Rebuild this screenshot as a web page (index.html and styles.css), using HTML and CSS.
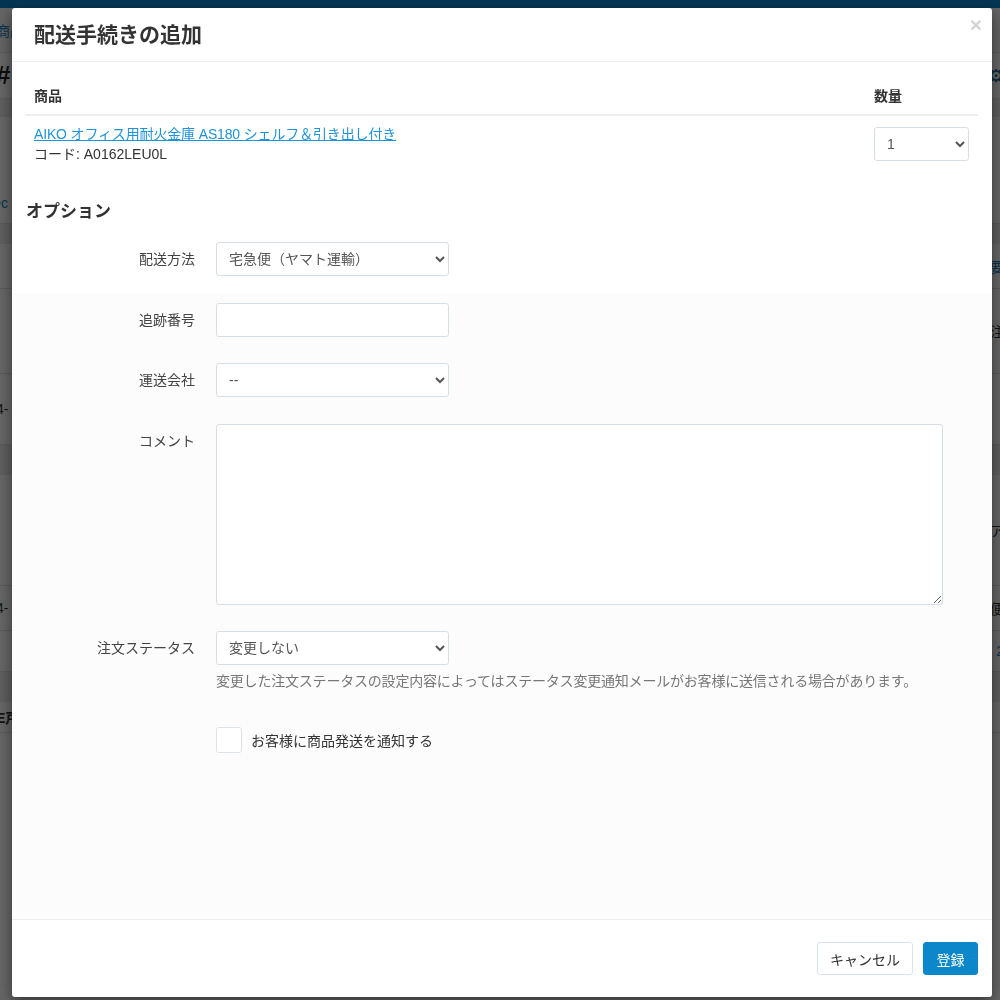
FILE: index.html
```html
<!DOCTYPE html>
<html lang="ja">
<head>
  <meta charset="utf-8">
  <title>配送手続きの追加</title>
  <link rel="stylesheet" href="styles.css">
</head>
<body>
  <div class="page">
    <div class="topbar"></div>
    <div class="bg-row r-crumb"><span class="bg-link">商品</span><span></span></div>
    <div class="bg-row r-title"><span class="bg-hash">#</span><span class="bg-gear">&#9881;</span></div>
    <div class="bg-band r-b1"></div>
    <div class="bg-row r-a"><span class="bg-link">&bull;c</span><span></span></div>
    <div class="bg-band r-b2"></div>
    <div class="bg-row r-c"><span></span><span class="bg-link">要</span></div>
    <div class="bg-row r-d"><span></span><span>注</span></div>
    <div class="bg-row r-e"><span>4-</span><span></span></div>
    <div class="bg-band r-b3"></div>
    <div class="bg-row r-f"><span></span><span>ア</span></div>
    <div class="bg-row r-g"><span>4-</span><span>便</span></div>
    <div class="bg-row r-h"><span></span><span class="bg-link">2</span></div>
    <div class="bg-band r-b4"></div>
    <div class="bg-row r-i"><span class="bg-bold">E戸</span><span></span></div>
  </div>

  <div class="backdrop"></div>

  <div class="modal">
    <div class="modal-header">
      <h4 class="modal-title">配送手続きの追加</h4>
      <button class="close" type="button">&times;</button>
    </div>

    <div class="modal-body">
      <table class="items">
        <thead>
          <tr>
            <th>商品</th>
            <th class="qty-col">数量</th>
          </tr>
        </thead>
        <tbody>
          <tr>
            <td>
              <a href="#" class="product-link">AIKO オフィス用耐火金庫 AS180 シェルフ＆引き出し付き</a>
              <div class="code">コード: A0162LEU0L</div>
            </td>
            <td class="qty-col">
              <select class="ctl qty">
                <option>1</option>
              </select>
            </td>
          </tr>
        </tbody>
      </table>

      <h3 class="section-title">オプション</h3>

      <div class="form">
        <label class="form-label" for="method">配送方法</label>
        <div>
          <select id="method" class="ctl short">
            <option>宅急便（ヤマト運輸）</option>
          </select>
        </div>

        <label class="form-label" for="tracking">追跡番号</label>
        <div>
          <input id="tracking" class="ctl short" type="text">
        </div>

        <label class="form-label" for="carrier">運送会社</label>
        <div>
          <select id="carrier" class="ctl short">
            <option>--</option>
          </select>
        </div>

        <label class="form-label" for="comment">コメント</label>
        <div>
          <textarea id="comment" class="ctl comment"></textarea>
        </div>

        <label class="form-label" for="status">注文ステータス</label>
        <div>
          <select id="status" class="ctl short">
            <option>変更しない</option>
          </select>
          <p class="help">変更した注文ステータスの設定内容によってはステータス変更通知メールがお客様に送信される場合があります。</p>
        </div>

        <div></div>
        <label class="check-row">
          <span class="check-box"></span>
          <span>お客様に商品発送を通知する</span>
        </label>
      </div>
    </div>

    <div class="modal-footer">
      <button class="btn btn-default" type="button">キャンセル</button>
      <button class="btn btn-primary" type="button">登録</button>
    </div>
  </div>
</body>
</html>
```

FILE: styles.css
```css
html,
body {
  margin: 0;
  padding: 0;
  height: 100%;
}

body {
  font-family: "Liberation Sans", "Noto Sans CJK JP", sans-serif;
  font-size: 14px;
  color: #333333;
  background-color: #ffffff;
  overflow: hidden;
}

/* Page behind the dialog */

.page {
  display: flex;
  flex-direction: column;
}

.topbar {
  height: 8px;
  background-color: #0a87d0;
}

.bg-row {
  display: flex;
  justify-content: space-between;
  align-items: center;
  margin: 0 -4px;
  border-bottom: 1px solid #e4e4e4;
  font-size: 14px;
  color: #333333;
}

.bg-band {
  background-color: #ececec;
}

.bg-link {
  color: #1a7fc1;
}

.bg-hash {
  font-size: 26px;
  font-weight: bold;
  color: #222222;
}

.bg-gear {
  font-size: 18px;
  color: #15628f;
}

.bg-bold {
  font-weight: bold;
}

.r-crumb { height: 44px; background-color: #f9f9f9; }
.r-title { height: 45px; }
.r-b1 { height: 18px; }
.r-a { height: 106px; align-items: flex-end; }
.r-a span { margin-bottom: 12px; }
.r-b2 { height: 20px; }
.r-c { height: 44px; }
.r-d { height: 84px; }
.r-e { height: 70px; }
.r-b3 { height: 30px; }
.r-f { height: 110px; }
.r-g { height: 44px; }
.r-h { height: 40px; }
.r-b4 { height: 30px; }
.r-i { height: 30px; }

.backdrop {
  position: fixed;
  inset: 0;
  background-color: rgba(0, 0, 0, 0.6);
}

/* Dialog */

.modal {
  position: fixed;
  top: 8px;
  left: 12px;
  width: 980px;
  height: 989px;
  display: flex;
  flex-direction: column;
  background-color: #ffffff;
  border-radius: 3px;
  box-shadow: 0 5px 15px rgba(0, 0, 0, 0.5);
}

.modal-header {
  display: flex;
  justify-content: space-between;
  align-items: flex-start;
  padding: 15px 10px 14px 22px;
  border-bottom: 1px solid #eeeeee;
}

.modal-title {
  margin: 0;
  font-size: 21px;
  line-height: 24px;
  font-weight: bold;
  color: #333333;
}

.close {
  margin-top: -9px;
  padding: 0;
  border: none;
  background: none;
  font-family: "Liberation Sans", sans-serif;
  font-size: 21px;
  font-weight: bold;
  line-height: 1;
  color: #d4d4d4;
  cursor: pointer;
}

.modal-body {
  flex: 1;
  padding: 16px 14px 0 13px;
  background: linear-gradient(to bottom, #ffffff 0, #ffffff 231px, #fcfcfc 231px);
}

.items {
  width: 100%;
  border-collapse: collapse;
}

.items th {
  padding: 8px 9px;
  line-height: 20px;
  text-align: left;
  font-weight: bold;
  color: #333333;
  border-bottom: 2px solid #eeeeee;
}

.items td {
  padding: 8px 8px 8px 9px;
  line-height: 20px;
  vertical-align: top;
}

.items .qty-col {
  width: 95px;
}

.product-link {
  color: #1f93d8;
  text-decoration: underline;
  letter-spacing: -0.15px;
}

.code {
  color: #333333;
}

.section-title {
  margin: 28px 0 18px 1px;
  font-size: 17px;
  line-height: 24px;
  font-weight: bold;
  color: #333333;
}

.form {
  display: grid;
  grid-template-columns: 170px 1fr;
  column-gap: 21px;
  row-gap: 26.5px;
}

.form-label {
  padding-top: 7px;
  line-height: 20px;
  text-align: right;
  color: #444444;
}

.ctl {
  box-sizing: border-box;
  height: 34px;
  padding: 6px 8px;
  border: 1px solid #d5dde6;
  border-radius: 3px;
  background-color: #ffffff;
  font-family: inherit;
  font-size: 14px;
  color: #555555;
}

.short {
  width: 233px;
}

.qty {
  width: 95px;
  margin-top: 3px;
}

.comment {
  display: block;
  width: 727px;
  height: 181px;
}

.help {
  margin: 6px 0 0;
  line-height: 20px;
  color: #777777;
  letter-spacing: -0.2px;
}

.check-row {
  display: flex;
  align-items: center;
  gap: 9px;
  margin-top: 9px;
  color: #333333;
}

.check-box {
  box-sizing: border-box;
  width: 26px;
  height: 26px;
  border: 1px solid #dde2e8;
  border-radius: 3px;
  background-color: #ffffff;
}

.modal-footer {
  display: flex;
  justify-content: flex-end;
  gap: 10px;
  padding: 22px 14px;
  border-top: 1px solid #eeeeee;
}

.btn {
  box-sizing: border-box;
  height: 33px;
  padding: 0 12px;
  border-radius: 3px;
  font-family: inherit;
  font-size: 14px;
  cursor: pointer;
}

.btn-default {
  width: 96px;
  border: 1px solid #dde3ea;
  background-color: #ffffff;
  color: #333333;
}

.btn-primary {
  width: 55px;
  border: 1px solid #0b87ca;
  background-color: #0b87ca;
  color: #ffffff;
}
```
